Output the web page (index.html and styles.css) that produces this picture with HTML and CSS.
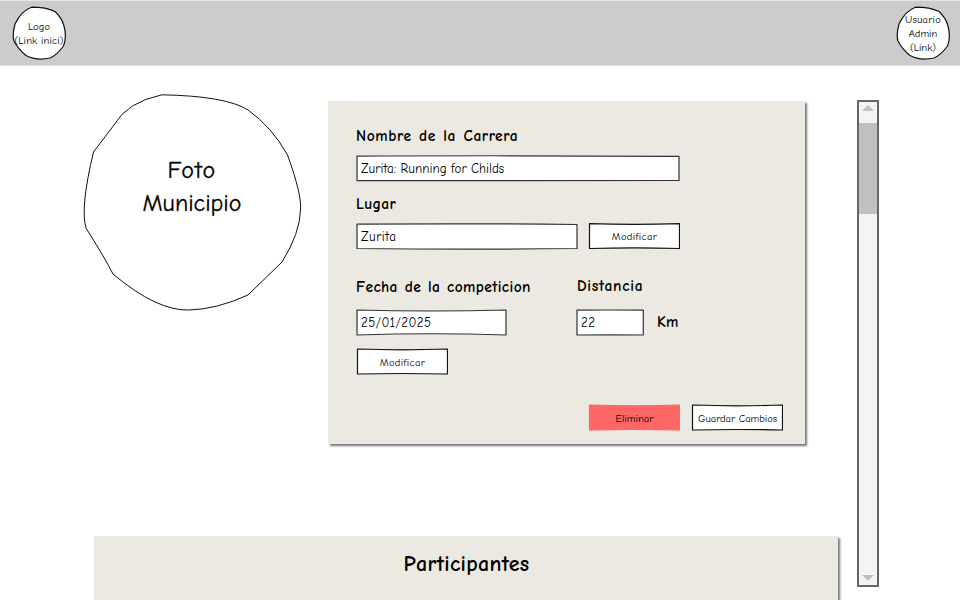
FILE: index.html
```html
<!DOCTYPE html>
<html lang="es">
<head>
<meta charset="utf-8">
<title>Editar carrera</title>
<link rel="stylesheet" href="styles.css">
</head>
<body>
<header class="topbar">
  <a class="badge">
    <svg class="sketch" viewBox="0 0 54 54"><path d="M19.500 1.200Q34 1.200 43 5.500Q50 12 52 20Q55 31 51.500 40Q45 49 38 52Q24 55 14 49.500Q6 43 2 35Q0 29 3 18Q9 5 19.500 1.200Z"/></svg>
    <span class="logo-name">Logo</span><span class="logo-link">(Link inici)</span>
  </a>
  <a class="badge">
    <svg class="sketch" viewBox="0 0 54 54"><path d="M19.500 1.200Q34 1.200 43 5.500Q50 12 52 20Q55 31 51.500 40Q45 49 38 52Q24 55 14 49.500Q6 43 2 35Q0 29 3 18Q9 5 19.500 1.200Z"/></svg>
    <span class="user-name">Usuario</span><span class="user-role">Admin</span><span class="user-link">(Link)</span>
  </a>
</header>
<div class="workspace">
  <main class="content">
    <div class="editor">
      <div class="photo">
        <svg class="sketch" viewBox="0 0 220 220"><path d="M80 .8Q144 2 166 16Q190 33 205.500 61Q220 101 218.500 116Q218 139 200 168L166 201Q134 215.500 107 216Q75 217 31 180Q24 166 4 134Q-2 114 11.500 58L32 31Q45 8 80 .8Z"/></svg>
        <span class="photo-top">Foto</span><span class="photo-bottom">Municipio</span>
      </div>
      <form class="card">
        <div class="row">
          <label class="label w-name">Nombre de la Carrera</label>
        </div>
        <div class="row controls first">
          <div class="field name"><svg class="sketch" viewBox="0 0 324 27"><path d="M1 1.200Q130 .3 323 1.300L323 25.500Q160 25 1 25.700Z"/></svg><span class="v-name">Zurita: Running for Childs</span></div>
        </div>
        <div class="row place-label"><label class="label w-place">Lugar</label></div>
        <div class="row controls second">
          <div class="field place"><svg class="sketch" viewBox="0 0 222 27"><path d="M1 1.200Q110 .3 221 1.500L221 25.500Q110 26.800 1 25.500Z"/></svg><span class="v-place">Zurita</span></div>
          <div class="button"><svg class="sketch" viewBox="0 0 92 27"><path d="M1.500 .6Q46 2.200 91.500 .6L91.500 25.500Q46 24.100 1.500 25.500Z"/></svg><span class="t-mod">Modificar</span></div>
        </div>
        <div class="split">
          <div class="date">
            <label class="label w-date">Fecha de la competicion</label>
            <div class="field day"><svg class="sketch" viewBox="0 0 151 27"><path d="M1 1Q75 3 150 1L150 26Q75 23.500 1 26Z"/></svg><span class="v-date">25/01/2025</span></div>
            <div class="button below"><svg class="sketch" viewBox="0 0 92 27"><path d="M1.500 1Q46 2.600 91.500 1L91.500 26Q46 25 1.500 26Z"/></svg><span class="t-mod">Modificar</span></div>
          </div>
          <div class="distance">
            <label class="label w-dist">Distancia</label>
            <div class="measure">
              <div class="field km"><svg class="sketch" viewBox="0 0 68 27"><path d="M1 1.200Q34 .8 67.300 1.200L67.300 26Q34 25.600 1 26Z"/></svg><span class="v-km">22</span></div>
              <span class="label unit">Km</span>
            </div>
          </div>
        </div>
        <div class="row actions">
          <div class="button danger"><svg class="sketch" viewBox="0 0 92 27"><path d="M1.500 1Q46 2.600 91.500 1L91.500 26Q46 25 1.500 26Z"/></svg><span class="t-del">Eliminar</span></div>
          <div class="button"><svg class="sketch" viewBox="0 0 92 27"><path d="M1.500 1Q46 2.600 91.500 1L91.500 26Q46 25 1.500 26Z"/></svg><span class="t-save">Guardar Cambios</span></div>
        </div>
      </form>
    </div>
    <section class="participants"><h2>Participantes</h2></section>
  </main>
  <div class="scrollbar">
    <svg class="arrow" viewBox="0 0 12 7"><path d="M0 6L6 0L12 6Z"/></svg>
    <div class="thumb"></div>
    <svg class="arrow down" viewBox="0 0 12 7"><path d="M0 0L6 6L12 0Z"/></svg>
  </div>
</div>
</body>
</html>
```
FILE: styles.css
```css
* { box-sizing: border-box; }
body {
  margin: 0;
  height: 600px;
  overflow: hidden;
  background: #fff;
  color: #000;
  font-family: "Comic Sans MS", "Comic Neue", Lato, sans-serif;
}
.topbar {
  display: flex;
  justify-content: space-between;
  height: 66px;
  padding: 5px 10px 0 12px;
  background: #ccc;
  border-top: 1px solid #e5e5e5;
  border-bottom: 1px solid #e0e0e0;
}
.badge {
  position: relative;
  display: flex;
  flex-direction: column;
  align-items: center;
  justify-content: center;
  width: 54px;
  height: 54px;
  padding-top: 2px;
  font-size: 10.500px;
  line-height: 14.300px;
  white-space: nowrap;
}
.sketch {
  position: absolute;
  inset: 0;
  width: 100%;
  height: 100%;
  fill: #fff;
  stroke: #111;
  stroke-width: 1.200;
  stroke-linejoin: round;
}
span { position: relative; white-space: nowrap; }
.logo-name { letter-spacing: .1px; }
.logo-link { letter-spacing: .15px; }
.user-name { letter-spacing: .2px; }
.workspace { display: flex; height: 534px; }
.content { width: 857px; height: 534px; padding: 28px 0 0 82px; }
.editor { display: flex; height: 442px; }
.photo {
  position: relative;
  display: flex;
  flex-direction: column;
  align-items: center;
  width: 220px;
  height: 220px;
  padding-top: 60px;
  font-size: 24px;
  line-height: 33px;
  -webkit-text-stroke: .3px #000;
}
.photo .sketch { stroke-width: 1; }
.photo-top { letter-spacing: 1.300px; }
.card {
  display: flex;
  flex-direction: column;
  width: 477px;
  height: 343px;
  margin: 7px 0 0 26px;
  padding: 24px 22px 0 28px;
  background: #ece9e2;
  box-shadow: 2px 2px 2px #777;
}
.row { display: flex; }
.label {
  display: block;
  font-size: 15.500px;
  font-weight: 700;
  line-height: 22px;
  white-space: nowrap;
}
.w-name { letter-spacing: .600px; word-spacing: 1.300px; }
.w-place { letter-spacing: .300px; }
.w-date { letter-spacing: .380px; word-spacing: .900px; }
.w-dist { letter-spacing: .700px; padding-left: 1px; }
.unit { letter-spacing: .300px; top: -1px; }
.v-name { letter-spacing: .050px; }
.v-place { letter-spacing: .500px; }
.v-date { letter-spacing: .350px; }
.v-km { letter-spacing: .500px; }
.t-mod { letter-spacing: .350px; }
.t-del { letter-spacing: .050px; }
.controls { gap: 10px; }
.first { margin-top: 8px; }
.place-label { margin-top: 11px; }
.second { margin-top: 8px; }
.field, .button {
  position: relative;
  display: flex;
  align-items: center;
  height: 27px;
}
.field { padding-left: 5px; font-size: 13px; }
.field .sketch { stroke: #333; }
.name { width: 324px; }
.place { width: 222px; }
.button {
  justify-content: center;
  width: 92px;
  padding-left: 1px;
  font-size: 10.500px;
}
.split { display: flex; margin-top: 26px; }
.date { width: 220px; }
.day { width: 151px; margin-top: 11px; }
.below { margin-top: 12px; padding-top: 2px; }
.distance { margin-top: -1px; }
.measure { display: flex; align-items: center; gap: 13px; margin-top: 12px; }
.km { width: 68px; }
.actions { justify-content: flex-end; gap: 11px; margin-top: 29px; }
.actions .button { padding-top: 2px; }
.danger .sketch { fill: #f66; stroke: #f66; }
.participants {
  width: 744px;
  height: 64px;
  margin-left: 12px;
  padding-top: 13px;
  background: #ece9e2;
  box-shadow: 2px 2px 2px #777;
  text-align: center;
}
h2 { margin: 0; padding-left: 1px; font-size: 22px; line-height: 30px; letter-spacing: .300px; }
.scrollbar {
  display: flex;
  flex-direction: column;
  align-items: center;
  width: 22px;
  height: 487px;
  margin-top: 34px;
  border: 2px solid #666;
  background: #f4f4f4;
}
.arrow { width: 12px; height: 7px; margin-top: 3px; fill: #c0c0c0; }
.thumb { width: 18px; height: 91px; margin-top: 11px; background: #c0c0c0; }
.down { margin: auto 0 3px; }
```
